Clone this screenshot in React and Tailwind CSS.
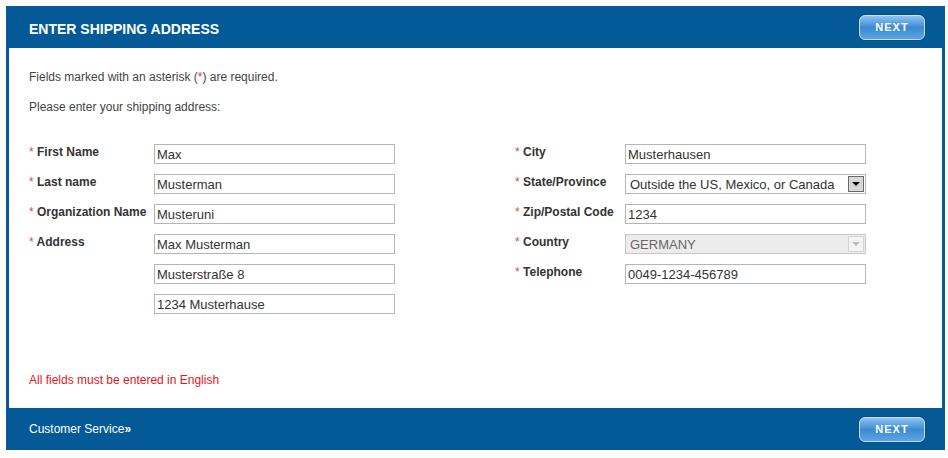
import { useState } from "react"

const font = { fontFamily: '"Liberation Sans", Arial, sans-serif' }

const NextButton = () => (
    <button className="w-[66px] h-[25px] rounded-[6px] border border-[#c9e0f4] bg-gradient-to-b from-[#8ec4ef] via-[#3a8ad3] to-[#5aa5e6] text-white text-[11px] font-bold tracking-[1px] shadow-[0_0_0_1px_#0b4d80] leading-none">
        NEXT
    </button>
)

const Label = ({ children }) => (
    <div className="pt-[1px] leading-[14px] text-[12px] font-bold text-[#333] whitespace-nowrap">
        <span className="text-[#e0474c] font-normal">*</span> {children}
    </div>
)

const Field = ({ value }) => (
    <div className="w-[241px] h-[20px] border border-[#b5b5b5] bg-white px-[2px] pt-[1px] text-[13px] leading-[18px] text-[#333] whitespace-nowrap overflow-hidden">
        {value}
    </div>
)

const Select = ({ value, disabled }) => (
    <div className={`w-[241px] h-[20px] border flex items-center justify-between pl-[4px] pr-[1px] text-[13px] leading-[18px] whitespace-nowrap ${disabled ? "border-[#c8c8c8] bg-[#ececec] text-[#666]" : "border-[#b5b5b5] bg-white text-[#333]"}`}>
        <span className="pt-[1px]">{value}</span>
        <span className={`w-[16px] h-[16px] flex items-center justify-center border ${disabled ? "border-[#d4d4d4] bg-[#f3f3f3]" : "border-[#6a6a6a] bg-[#d8d8d8]"}`}>
            <span className={`w-0 h-0 border-l-[4px] border-r-[4px] border-t-[4px] border-l-transparent border-r-transparent ${disabled ? "border-t-[#bdbdbd]" : "border-t-black"}`} />
        </span>
    </div>
)

const Row = ({ label, labelW, children }) => (
    <div className="flex items-start h-[20px]">
        <div style={{ width: labelW }}>{label ? <Label>{label}</Label> : null}</div>
        {children}
    </div>
)

export default function App() {
    const [left] = useState([
        ["First Name", "Max"],
        ["Last name", "Musterman"],
        ["Organization Name", "Musteruni"],
        ["Address", "Max Musterman"],
        ["", "Musterstraße 8"],
        ["", "1234 Musterhause"],
    ])

    return (
        <div className="w-[948px] h-[458px] bg-white pl-[6px] pt-[6px]" style={font}>
            <div className="w-[939px] bg-[#035a97]">
                <header className="h-[42px] flex items-center justify-between pl-[23px] pr-[20px]">
                    <h1 className="text-white text-[14px] font-bold leading-none pt-[3px]">ENTER SHIPPING ADDRESS</h1>
                    <NextButton />
                </header>

                <div className="mx-[3px] bg-white h-[360px] pl-[20px] pt-[22px]">
                    <p className="text-[12px] leading-[14px] text-[#444]">
                        Fields marked with an asterisk (<span className="text-[#d9343a]">*</span>) are required.
                    </p>
                    <p className="mt-[16px] text-[12px] leading-[14px] text-[#444]">Please enter your shipping address:</p>

                    <div className="mt-[30px] flex gap-[120px]">
                        <div className="flex flex-col gap-[10px]">
                            {left.map(([l, v], i) => (
                                <Row key={i} label={l} labelW={125}>
                                    <Field value={v} />
                                </Row>
                            ))}
                        </div>
                        <div className="flex flex-col gap-[10px]">
                            <Row label="City" labelW={110}><Field value="Musterhausen" /></Row>
                            <Row label="State/Province" labelW={110}><Select value="Outside the US, Mexico, or Canada" /></Row>
                            <Row label="Zip/Postal Code" labelW={110}><Field value="1234" /></Row>
                            <Row label="Country" labelW={110}><Select value="GERMANY" disabled /></Row>
                            <Row label="Telephone" labelW={110}><Field value="0049-1234-456789" /></Row>
                        </div>
                    </div>

                    <p className="mt-[59px] text-[12px] leading-[14px] text-[#e0161f]">All fields must be entered in English</p>
                </div>

                <footer className="h-[42px] flex items-center justify-between pl-[23px] pr-[20px]">
                    <a className="text-white text-[12px] leading-none pb-[1px]">
                        Customer Service<span className="font-bold">»</span>
                    </a>
                    <NextButton />
                </footer>
            </div>
        </div>
    )
}
